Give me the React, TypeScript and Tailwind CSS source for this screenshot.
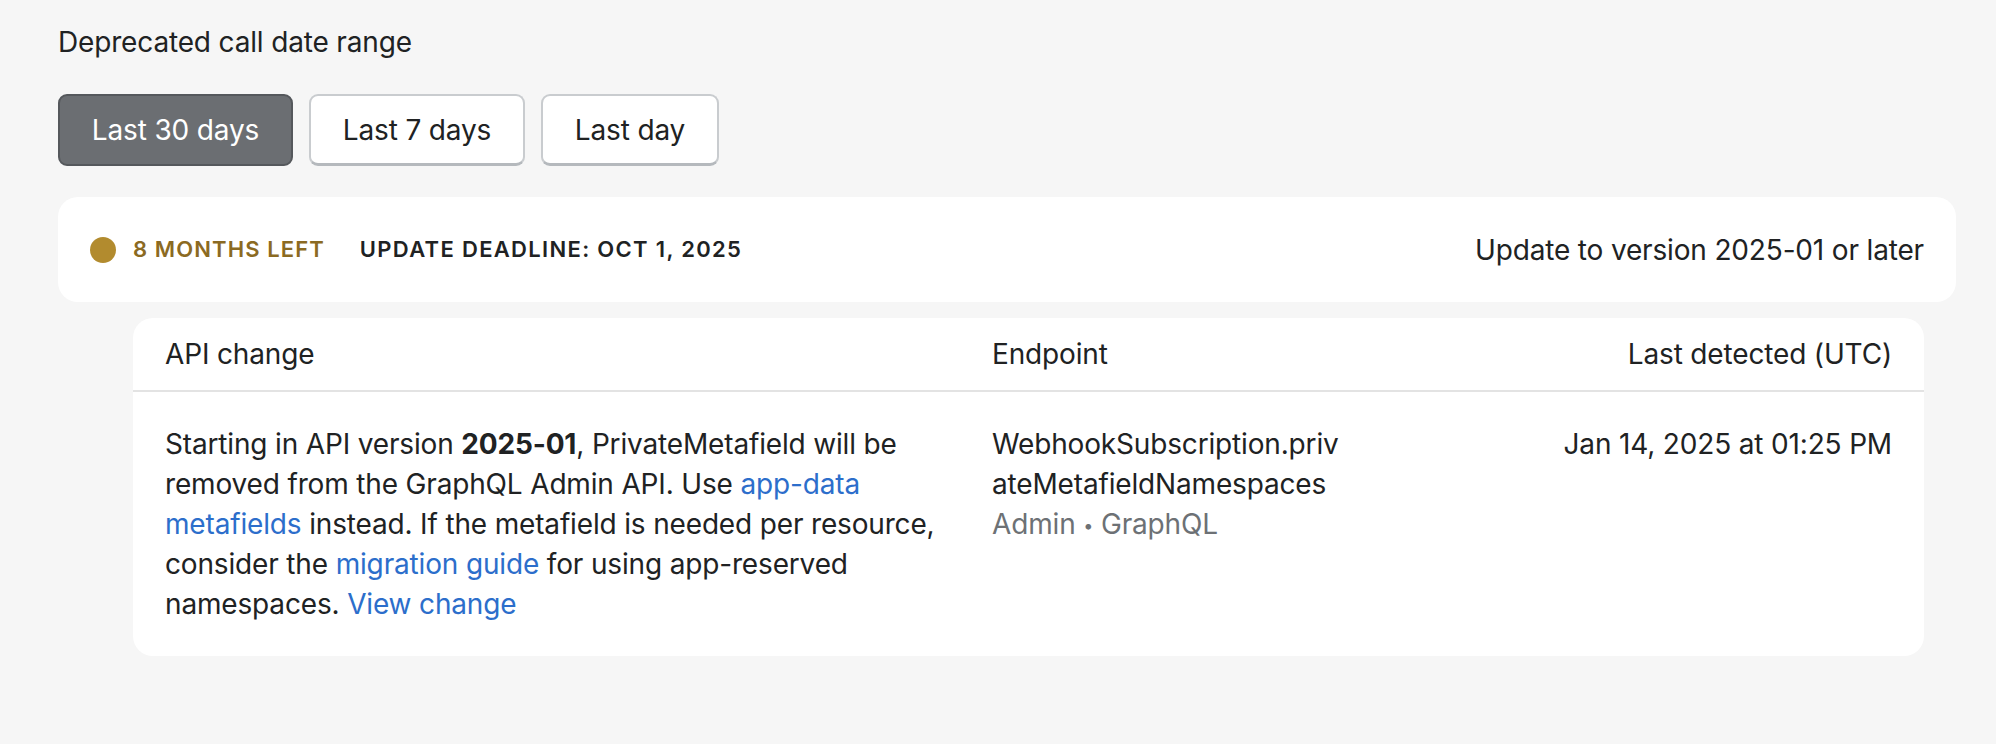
import React from "react";

const ranges = ["Last 30 days", "Last 7 days", "Last day"];
const widths = ["w-[235px]", "w-[216px]", "w-[178px]"];

const RangeButtons = ({ active }: { active: number }) => (
  <div className="flex gap-[16px] mt-[32px]">
    {ranges.map((label, i) =>
      i === active ? (
        <button
          key={label}
          className={`${widths[i]} h-[72px] rounded-[9px] bg-[#6b6e72] border-2 border-[#55585c] text-white text-[28px] leading-[40px]`}
        >
          {label}
        </button>
      ) : (
        <button
          key={label}
          className={`${widths[i]} h-[72px] rounded-[9px] bg-white border-2 border-[#c9cccf] border-b-[3px] border-b-[#b5b9bd] text-[#202223] text-[28px] leading-[40px]`}
        >
          {label}
        </button>
      )
    )}
  </div>
);

const DeadlineCard = () => (
  <div className="mt-[31px] h-[105px] bg-white rounded-[20px] flex items-center justify-between px-[32px]">
    <div className="flex items-center">
      <span className="w-[26px] h-[26px] rounded-full bg-[#b28b2e]" />
      <span className="ml-[17px] text-[22px] font-semibold tracking-[0.05em] text-[#8b6a22]">
        8 MONTHS LEFT
      </span>
      <span className="ml-[35px] text-[22px] font-semibold tracking-[0.06em] text-[#202223]">
        UPDATE DEADLINE: OCT 1, 2025
      </span>
    </div>
    <span className="text-[28px] leading-[40px] text-[#202223]">Update to version 2025-01 or later</span>
  </div>
);

const ChangesTable = () => (
  <div className="mt-[16px] ml-[75px] mr-[32px] bg-white rounded-[20px] overflow-hidden">
    <div className="grid grid-cols-[795px_346px_1fr] gap-x-[32px] px-[32px] py-[16px] border-b-2 border-[#e3e3e3] text-[28px] leading-[40px] text-[#202223]">
      <div>API change</div>
      <div>Endpoint</div>
      <div className="text-right">Last detected (UTC)</div>
    </div>
    <div className="grid grid-cols-[795px_346px_1fr] gap-x-[32px] px-[32px] pt-[32px] pb-[32px] text-[28px] leading-[40px] text-[#202223]">
      <div>
        Starting in API version <span className="font-bold">2025-01</span>, PrivateMetafield will be removed
        from the GraphQL Admin API. Use <a className="text-[#2c6ecb]">app-data metafields</a> instead. If the
        metafield is needed per resource, consider the <a className="text-[#2c6ecb]">migration guide</a> for
        using app-reserved namespaces. <a className="text-[#2c6ecb]">View change</a>
      </div>
      <div>
        <div className="whitespace-nowrap">WebhookSubscription.priv</div>
        <div className="whitespace-nowrap">ateMetafieldNamespaces</div>
        <div className="text-[#6d7175]">
          Admin <span className="text-[18px] align-[2px]">•</span> GraphQL
        </div>
      </div>
      <div className="text-right">Jan 14, 2025 at 01:25 PM</div>
    </div>
  </div>
);

export default function App() {
  return (
    <div className="min-h-[744px] bg-[#f6f6f6] pl-[58px] pr-[40px] pt-[22px] font-['Inter',sans-serif] tracking-[-0.01em]">
      <h2 className="text-[28px] leading-[40px] text-[#202223]">Deprecated call date range</h2>
      <RangeButtons active={0} />
      <DeadlineCard />
      <ChangesTable />
    </div>
  );
}
